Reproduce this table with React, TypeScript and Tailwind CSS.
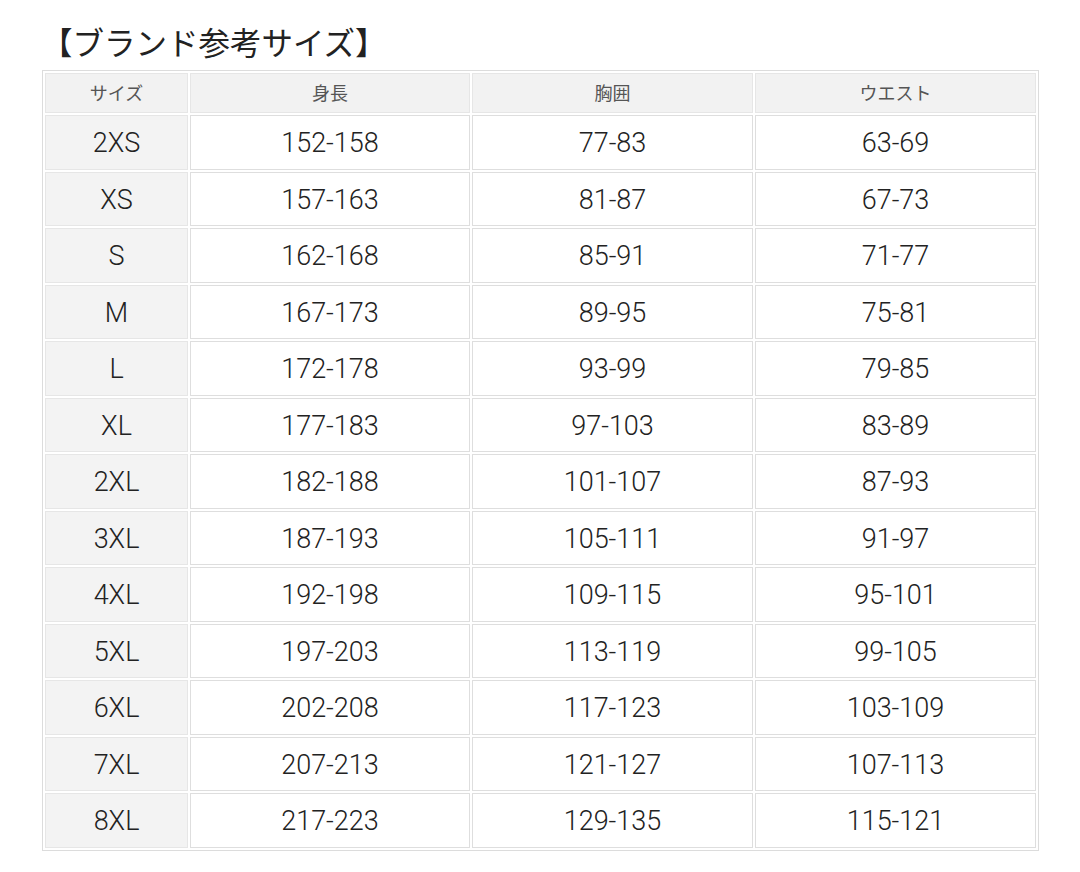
import React from "react";

const rows: [string, string, string, string][] = [
  ["2XS", "152-158", "77-83", "63-69"],
  ["XS", "157-163", "81-87", "67-73"],
  ["S", "162-168", "85-91", "71-77"],
  ["M", "167-173", "89-95", "75-81"],
  ["L", "172-178", "93-99", "79-85"],
  ["XL", "177-183", "97-103", "83-89"],
  ["2XL", "182-188", "101-107", "87-93"],
  ["3XL", "187-193", "105-111", "91-97"],
  ["4XL", "192-198", "109-115", "95-101"],
  ["5XL", "197-203", "113-119", "99-105"],
  ["6XL", "202-208", "117-123", "103-109"],
  ["7XL", "207-213", "121-127", "107-113"],
  ["8XL", "217-223", "129-135", "115-121"],
];

const num = { fontFamily: 'Roboto, "Noto Sans", sans-serif' };

export default function App() {
  return (
    <div
      className="w-[1080px] h-[872px] bg-white"
      style={{ fontFamily: '"Noto Sans CJK JP", "Noto Sans", sans-serif' }}
    >
      <div className="pt-[20px] pl-[41px] text-[31.5px] leading-[42px] text-[#222] font-normal">
        【ブランド参考サイズ】
      </div>
      <div className="pl-[42px] pt-[8px]">
        <table className="w-[995px] border-separate border-spacing-[2px] border border-[#dcdcdc] table-fixed">
          <colgroup>
            <col className="w-[143px]" />
            <col className="w-[280px]" />
            <col className="w-[281px]" />
            <col className="w-[281px]" />
          </colgroup>
          <thead>
            <tr className="h-[40px]">
              {["サイズ", "身長", "胸囲", "ウエスト"].map((h) => (
                <th
                  key={h}
                  className="bg-[#f2f2f2] border border-[#e6e6e6] font-normal text-[18px] text-[#555] text-center p-0 pb-[2px]"
                >
                  {h}
                </th>
              ))}
            </tr>
          </thead>
          <tbody>
            {rows.map((r) => (
              <tr key={r[0]} className="h-[54.5px]">
                <td
                  style={num}
                  className="bg-[#f3f3f3] border border-[#e6e6e6] text-center text-[27px] font-light text-[#222] p-0 pt-[2px]"
                >
                  {r[0]}
                </td>
                {r.slice(1).map((c, i) => (
                  <td
                    key={i}
                    style={num}
                    className="bg-white border border-[#dedede] text-center text-[27px] font-light text-[#222] p-0 pt-[2px]"
                  >
                    {c}
                  </td>
                ))}
              </tr>
            ))}
          </tbody>
        </table>
      </div>
    </div>
  );
}
